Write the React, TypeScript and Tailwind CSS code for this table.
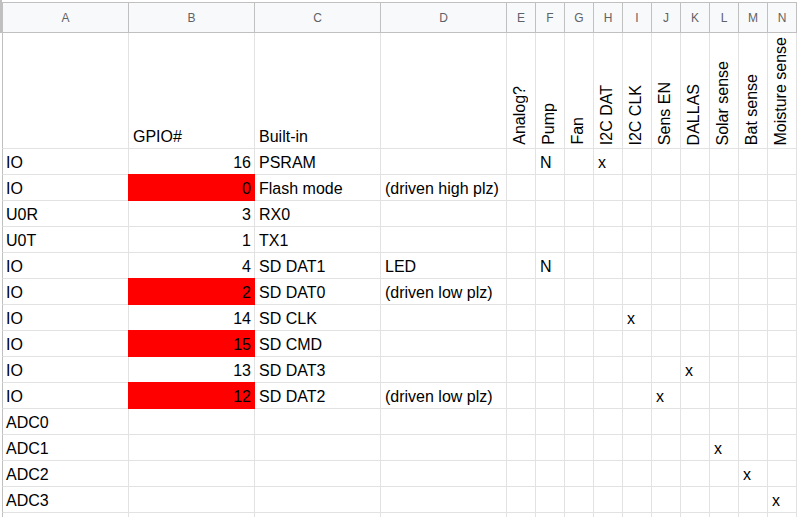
import React from "react";

type Row = {
  a?: string;
  b?: string;
  c?: string;
  d?: string;
  red?: boolean;
  m?: Record<string, string>;
};

const narrow = ["E", "F", "G", "H", "I", "J", "K", "L", "M", "N"];
const rotated: Record<string, string> = {
  E: "Analog?",
  F: "Pump",
  G: "Fan",
  H: "I2C DAT",
  I: "I2C CLK",
  J: "Sens EN",
  K: "DALLAS",
  L: "Solar sense",
  M: "Bat sense",
  N: "Moisture sense",
};

const rows: Row[] = [
  { a: "IO", b: "16", c: "PSRAM", m: { F: "N", H: "x" } },
  { a: "IO", b: "0", c: "Flash mode", d: "(driven high plz)", red: true },
  { a: "U0R", b: "3", c: "RX0" },
  { a: "U0T", b: "1", c: "TX1" },
  { a: "IO", b: "4", c: "SD DAT1", d: "LED", m: { F: "N" } },
  { a: "IO", b: "2", c: "SD DAT0", d: "(driven low plz)", red: true },
  { a: "IO", b: "14", c: "SD CLK", m: { I: "x" } },
  { a: "IO", b: "15", c: "SD CMD", red: true },
  { a: "IO", b: "13", c: "SD DAT3", m: { K: "x" } },
  { a: "IO", b: "12", c: "SD DAT2", d: "(driven low plz)", red: true, m: { J: "x" } },
  { a: "ADC0" },
  { a: "ADC1", m: { L: "x" } },
  { a: "ADC2", m: { M: "x" } },
  { a: "ADC3", m: { N: "x" } },
];

const gl = "border-[#e2e2e3]";

function HeaderLetters() {
  const wide = ["A", "B", "C", "D"];
  return (
    <div className="flex h-[33px] border-l-2 border-[#c0c0c0] pt-[2px]">
      {wide.map((l, i) => (
        <div
          key={l}
          className={`flex h-full items-center justify-center border-t border-b border-r border-[#c0c0c0] bg-[#f8f9fa] text-[12px] text-[#5f6368] ${
            i === 0 ? "w-[127px] border-l" : "w-[126px]"
          }`}
        >
          {l}
        </div>
      ))}
      {narrow.map((l) => (
        <div
          key={l}
          className="flex h-full w-[29px] items-center justify-center border-t border-b border-r border-[#c0c0c0] bg-[#f8f9fa] text-[12px] text-[#5f6368]"
        >
          {l}
        </div>
      ))}
    </div>
  );
}

function TitleRow() {
  return (
    <div className="flex h-[116px] pl-[2px]">
      <div className={`w-[127px] border-l border-r border-b ${gl} border-l-[#c0c0c0]`} />
      <div className={`flex w-[126px] items-end border-r border-b ${gl} pb-[2px] pl-[4px]`}>
        GPIO#
      </div>
      <div className={`flex w-[126px] items-end border-r border-b ${gl} pb-[2px] pl-[4px]`}>
        Built-in
      </div>
      <div className={`w-[126px] border-r border-b ${gl}`} />
      {narrow.map((l) => (
        <div
          key={l}
          className={`flex w-[29px] items-end border-r border-b ${gl} pb-[3px] pl-[4px]`}
        >
          <span className="rotate-180 whitespace-nowrap [writing-mode:vertical-rl]">
            {rotated[l]}
          </span>
        </div>
      ))}
    </div>
  );
}

function DataRow({ r }: { r: Row }) {
  return (
    <div className="flex h-[26px] pl-[2px]">
      <div className={`flex w-[127px] items-end border-l border-r border-b ${gl} border-l-[#c0c0c0] pb-[2px] pl-[3px]`}>
        {r.a}
      </div>
      <div className={`relative flex w-[126px] items-end justify-end border-r border-b ${gl} pb-[2px] pr-[3px]`}>
        {r.red && <div className="absolute -top-px -left-px -right-px -bottom-px bg-[#ff0000]" />}
        <span className="relative">{r.b}</span>
      </div>
      <div className={`flex w-[126px] items-end whitespace-nowrap border-r border-b ${gl} pb-[2px] pl-[4px]`}>
        {r.c}
      </div>
      <div className={`flex w-[126px] items-end whitespace-nowrap border-r border-b ${gl} pb-[2px] pl-[4px]`}>
        {r.d}
      </div>
      {narrow.map((l) => (
        <div
          key={l}
          className={`flex w-[29px] items-end border-r border-b ${gl} pb-[2px] pl-[4px]`}
        >
          {r.m?.[l]}
        </div>
      ))}
    </div>
  );
}

export default function App() {
  return (
    <div className="h-[517px] w-[798px] overflow-hidden bg-white font-['Liberation_Sans',Arial,sans-serif] text-[16px] leading-[18px] text-black">
      <HeaderLetters />
      <TitleRow />
      {rows.map((r, i) => (
        <DataRow key={i} r={r} />
      ))}
      <DataRow r={{}} />
    </div>
  );
}
